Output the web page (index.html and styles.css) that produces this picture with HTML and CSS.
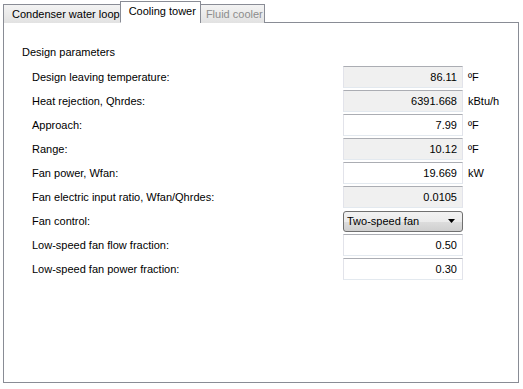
FILE: index.html
```html
<!DOCTYPE html>
<html lang="en">
<head>
  <meta charset="UTF-8">
  <title>Cooling tower</title>
  <link rel="stylesheet" href="styles.css">
</head>
<body>
  <div class="tabs">
    <div class="tab">Condenser water loop</div>
    <div class="tab active">Cooling tower</div>
    <div class="tab disabled">Fluid cooler</div>
  </div>
  <div class="panel">
    <div class="group">Design parameters</div>
    <div class="form">
      <label>Design leaving temperature:</label>
      <div class="field ro">86.11</div>
      <span class="unit">ºF</span>

      <label>Heat rejection, Qhrdes:</label>
      <div class="field ro">6391.668</div>
      <span class="unit">kBtu/h</span>

      <label>Approach:</label>
      <div class="field">7.99</div>
      <span class="unit">ºF</span>

      <label>Range:</label>
      <div class="field ro">10.12</div>
      <span class="unit">ºF</span>

      <label>Fan power, Wfan:</label>
      <div class="field">19.669</div>
      <span class="unit">kW</span>

      <label>Fan electric input ratio, Wfan/Qhrdes:</label>
      <div class="field ro">0.0105</div>
      <span class="unit"></span>

      <label>Fan control:</label>
      <div class="combo">
        <span>Two-speed fan</span>
        <svg width="7" height="4" viewBox="0 0 7 4"><path d="M0 0h7L3.5 4z" fill="#000"/></svg>
      </div>
      <span class="unit"></span>

      <label>Low-speed fan flow fraction:</label>
      <div class="field">0.50</div>
      <span class="unit"></span>

      <label>Low-speed fan power fraction:</label>
      <div class="field">0.30</div>
      <span class="unit"></span>
    </div>
  </div>
</body>
</html>
```

FILE: styles.css
```css
body { margin: 0; padding: 2px 0 0 3px; background: #fff; font-family: "Liberation Sans", Arial, sans-serif; font-size: 11px; color: #000; }
.tabs { display: flex; align-items: flex-end; height: 21px; margin-bottom: -1px; position: relative; z-index: 1; }
.tab { height: 19px; line-height: 18px; padding: 0 0 0 8px; border: 1px solid #898c95; border-bottom: none; box-sizing: border-box; background: linear-gradient(#f3f3f3, #e2e2e2); margin-right: -1px; }
.tab.active { height: 22px; line-height: 18px; padding: 0 4px 0 8px; background: #fff; border-bottom: 1px solid #fff; }
.tab.disabled { color: #8d8d8d; padding: 0 1px 0 5px; }
.panel { width: 516px; height: 361px; box-sizing: border-box; border: 1px solid #898c95; padding: 23px 0 0 18px; }
.group { line-height: 13px; margin-bottom: 7px; }
.form { display: grid; grid-template-columns: 311px 120px auto; grid-auto-rows: 22px; row-gap: 2px; padding-left: 10px; align-items: center; }
.form label { white-space: nowrap; }
.field { height: 22px; box-sizing: border-box; border: 1px solid #e2e3ea; border-top-color: #abadb3; border-bottom-color: #e3e9ef; background: #fff; text-align: right; padding: 0 5px; line-height: 20px; }
.field.ro { background: #f0f0f0; }
.unit { padding-left: 5px; }
.combo { height: 21px; box-sizing: border-box; border: 1px solid #707070; border-radius: 3px; background: linear-gradient(#f2f2f2 0%, #ebebeb 50%, #dddddd 51%, #cfcfcf 100%); display: flex; align-items: center; justify-content: space-between; padding: 0 7px 0 3px; }
```
